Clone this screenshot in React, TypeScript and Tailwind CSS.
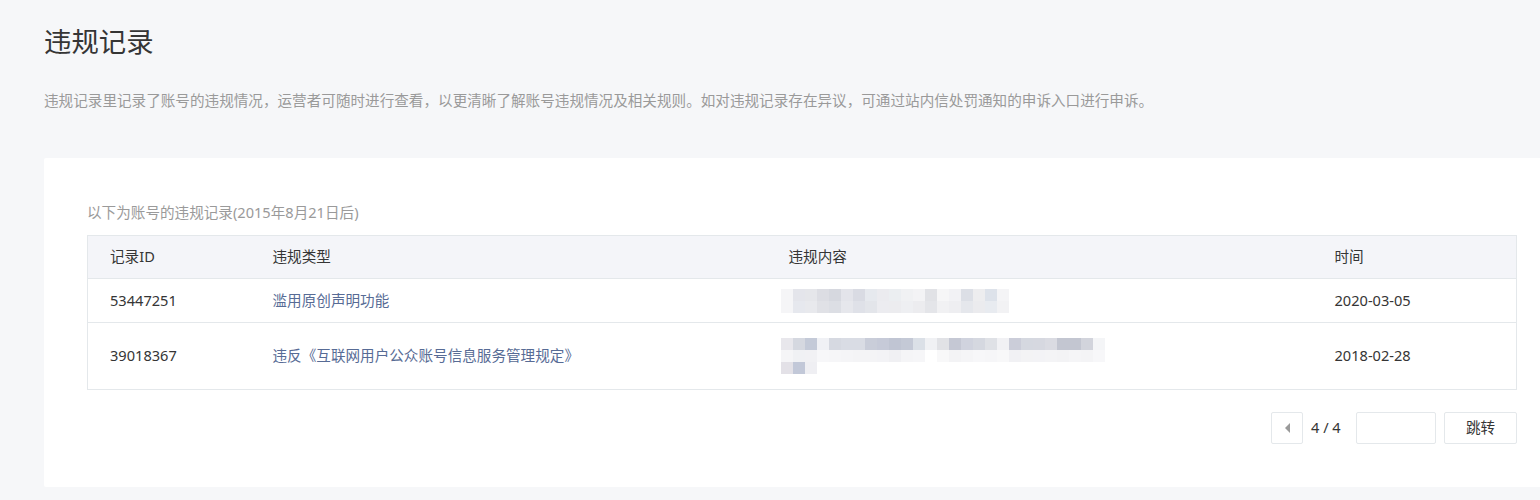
import React from "react";

const font = { fontFamily: '"Noto Sans", "Noto Sans CJK SC", sans-serif' };

// blurred (mosaic) content cells, 12px squares
const mosaicA = [
  ["#f5f5f7", "#e4e5eb", "#e5e6ea", "#dcdde3", "#d6d8df", "#e3e4ea", "#d9dbe3", "#e6e9ee", "#ebebef", "#ebeef1", "#f0f1f3", "#f3f3f5", "#e1e2e6", "#f6f6f7", "#f2f2f5", "#dcdfe6", "#ededef", "#dde2ea", "#f4f4f6"],
  ["#f5f5f7", "#e6e8ee", "#e8e9ed", "#e0e1e6", "#dcdee4", "#e6e7ec", "#dfe1e8", "#e3e5ea", "#ececf0", "#ececef", "#eeeff2", "#ececef", "#e4e5e9", "#f1f1f3", "#eeeef1", "#e5e7ec", "#ebebee", "#e8ebf0", "#f2f2f4"],
];
const mosaicB = [
  ["#e8e7ec", "#d5d8e0", "#c4cad8", "#f0f1f5", "#d6d9e1", "#d9dce4", "#d9dce4", "#c9cdd9", "#c6cad8", "#c0c5d3", "#c4c9d6", "#dbe0e7", "#f0f1f4", "#e1e2e6", "#c5c8d4", "#d0d3de", "#d5d8e0", "#dfe1e6", "#f1f1f4", "#cbcdd9", "#d5d8e0", "#d6d8e0", "#dadbe2", "#c3c6d1", "#c3c6d1", "#d2d4dc", "#f4f5f7"],
  ["#f5f5f7", "#f0f1f4", "#f1f1f4", "#f7f7f9", "#f6f6f8", "#f5f5f7", "#f4f4f6", "#f4f4f6", "#f3f3f6", "#f0f0f3", "#f5f5f7", "#f6f6f8", "#ffffff", "#f8f8f9", "#f3f3f5", "#f5f5f7", "#f7f7f9", "#f6f6f8", "#f8f8f9", "#f1f1f4", "#f3f3f5", "#f3f3f6", "#f4f4f6", "#f3f3f5", "#f5f5f7", "#f4f4f6", "#f7f7f9"],
  ["#e3e1e7", "#c2c8d8", "#efeff3"],
];

function Mosaic({ rows }: { rows: string[][] }) {
  return (
    <div className="flex flex-col">
      {rows.map((r, i) => (
        <div key={i} className="flex">
          {r.map((c, j) => (
            <div key={j} className="h-[12px] w-[12px]" style={{ backgroundColor: c }} />
          ))}
        </div>
      ))}
    </div>
  );
}

const records = [
  { id: "53447251", type: "滥用原创声明功能", content: mosaicA, time: "2020-03-05", h: "h-[44px]" },
  { id: "39018367", type: "违反《互联网用户公众账号信息服务管理规定》", content: mosaicB, time: "2018-02-28", h: "h-[67px]" },
];

export default function App() {
  return (
    <div className="min-h-[500px] w-[1540px] overflow-hidden bg-[#f6f7f9] pl-[44px] pt-[26px]" style={font}>
      <h1 className="text-[27.4px] leading-[32px] font-normal text-[#353535]">违规记录</h1>
      <p className="mt-[32px] text-[14.6px] leading-[20px] text-[#9a9a9a]">
        违规记录里记录了账号的违规情况，运营者可随时进行查看，以更清晰了解账号违规情况及相关规则。如对违规记录存在异议，可通过站内信处罚通知的申诉入口进行申诉。
      </p>

      <div className="mt-[48px] w-[1516px] rounded-[2px] bg-white px-[43px] pb-[43px] pt-[44px]">
        <div className="mb-[13px] text-[14.6px] leading-[20px] text-[#9a9a9a]">以下为账号的违规记录(2015年8月21日后)</div>

        <table className="w-[1430px] table-fixed border-collapse border border-[#e4e8eb] text-[14.6px] text-[#353535]">
          <colgroup>
            <col className="w-[163px]" />
            <col className="w-[516px]" />
            <col className="w-[546px]" />
            <col />
          </colgroup>
          <thead>
            <tr className="h-[43px] bg-[#f4f5f9]">
              <th className="pl-[22px] text-left font-normal">记录ID</th>
              <th className="pl-[22px] text-left font-normal">违规类型</th>
              <th className="pl-[22px] text-left font-normal">违规内容</th>
              <th className="pl-[22px] text-left font-normal">时间</th>
            </tr>
          </thead>
          <tbody>
            {records.map((r) => (
              <tr key={r.id} className={`${r.h} border-t border-[#e4e8eb]`}>
                <td className="pl-[22px]">{r.id}</td>
                <td className="pl-[22px] text-[#576b95]">{r.type}</td>
                <td className="pl-[14px]">
                  <Mosaic rows={r.content} />
                </td>
                <td className="pl-[22px]">{r.time}</td>
              </tr>
            ))}
          </tbody>
        </table>

        <div className="mt-[22px] flex w-[1430px] items-center justify-end text-[14.6px] text-[#353535]">
          <button className="flex h-[32px] w-[32px] items-center justify-center rounded-[2px] border border-[#e4e8eb] bg-white">
            <span className="block h-0 w-0 border-y-[5px] border-r-[5px] border-y-transparent border-r-[#9a9a9a]" />
          </button>
          <span className="ml-[8px] w-[45px]">4 / 4</span>
          <input className="h-[32px] w-[80px] rounded-[2px] border border-[#e4e8eb] outline-none" />
          <button className="ml-[8px] h-[32px] w-[73px] rounded-[2px] border border-[#e4e8eb] bg-white text-[#353535]">跳转</button>
        </div>
      </div>
    </div>
  );
}
